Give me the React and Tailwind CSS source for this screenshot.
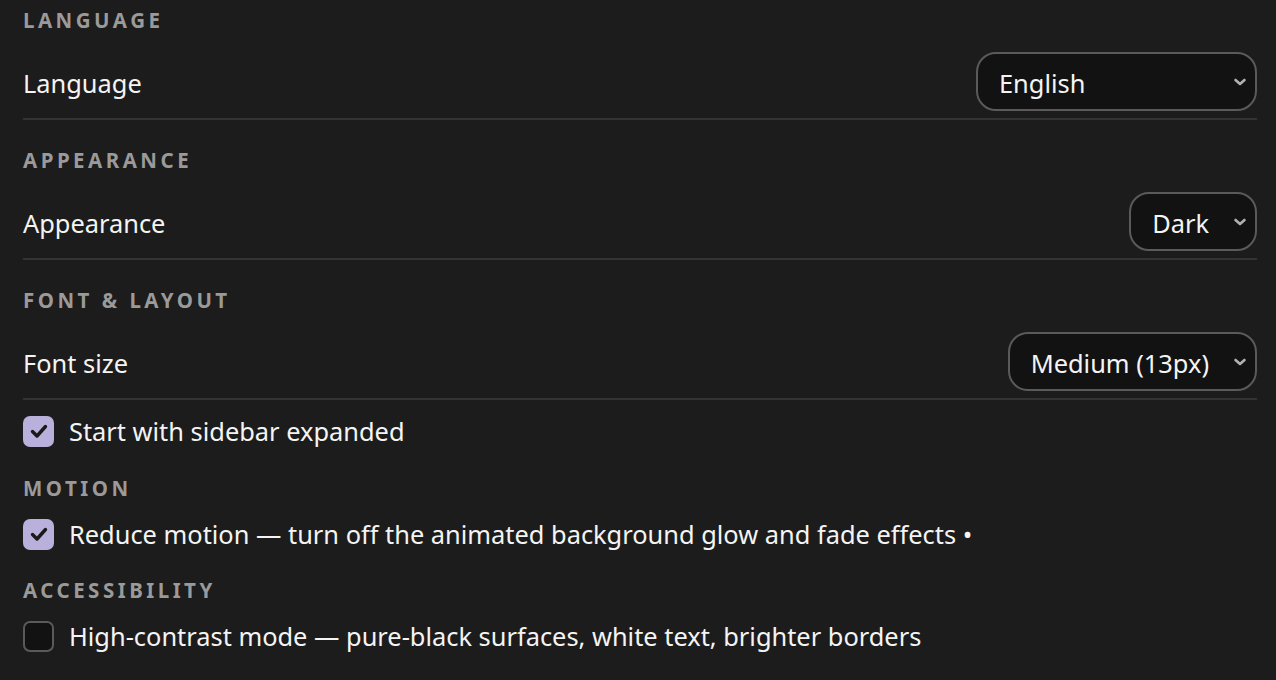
import React from "react";

function Chevron() {
  return (
    <svg width="14" height="9" viewBox="0 0 14 9" className="absolute right-[8px] top-1/2 -translate-y-1/2">
      <path d="M2.5 2.5l4.5 4 4.5-4" fill="none" stroke="#b0b0b0" strokeWidth="2.6" strokeLinecap="round" strokeLinejoin="round" />
    </svg>
  );
}

function Select({ value, className }) {
  return (
    <div
      className={`relative h-[59px] flex items-center rounded-[20px] border-2 border-[#5a5a5a] bg-[#121212] pl-[21px] pr-[46px] text-[#f4f4f4] ${className}`}
    >
      <span className="pt-[3px]">{value}</span>
      <Chevron />
    </div>
  );
}

function Heading({ children, className }) {
  return (
    <div
      className={`h-[24px] leading-[24px] text-[20.5px] font-bold tracking-[0.17em] text-[#9a9a9a] ${className}`}
    >
      {children}
    </div>
  );
}

function Row({ label, value, selectClass }) {
  return (
    <div className="mt-[20px] flex items-center justify-between pb-[7px] border-b-2 border-[#333333]">
      <span className="pt-[3px] text-[#f4f4f4]">{label}</span>
      <Select value={value} className={selectClass} />
    </div>
  );
}

function Check({ checked, label, className }) {
  return (
    <div className={`flex items-center gap-[15px] h-[30px] ${className}`}>
      {checked ? (
        <span className="w-[31px] h-[31px] shrink-0 rounded-[7px] bg-[#b9b1dc] flex items-center justify-center">
          <svg width="22" height="18" viewBox="0 0 22 18">
            <path d="M4.5 9.5l4.5 4.5 8.5-9.5" fill="none" stroke="#1a1a1a" strokeWidth="3.4" strokeLinecap="round" strokeLinejoin="round" />
          </svg>
        </span>
      ) : (
        <span className="w-[31px] h-[31px] shrink-0 rounded-[7px] border-2 border-[#5a5a5a] bg-[#121212]" />
      )}
      <span className="text-[#f4f4f4]">{label}</span>
    </div>
  );
}

export default function App() {
  return (
    <div
      className="min-h-screen flex flex-col bg-[#1c1c1c] pl-[23px] pr-[19px] text-[25.4px]"
      style={{ fontFamily: '"Noto Sans", sans-serif' }}
    >
      <Heading className="mt-[8px]">LANGUAGE</Heading>
      <Row label="Language" value="English" selectClass="w-[281px]" />

      <Heading className="mt-[28px]">APPEARANCE</Heading>
      <Row label="Appearance" value="Dark" />

      <Heading className="mt-[28px]">FONT &amp; LAYOUT</Heading>
      <Row label="Font size" value="Medium (13px)" />

      <Check checked label="Start with sidebar expanded" className="mt-[16px]" />

      <Heading className="mt-[30px]">MOTION</Heading>
      <Check
        checked
        label="Reduce motion — turn off the animated background glow and fade effects •"
        className="mt-[19px]"
      />

      <Heading className="mt-[29px]">ACCESSIBILITY</Heading>
      <Check label="High-contrast mode — pure-black surfaces, white text, brighter borders" className="mt-[19px]" />
    </div>
  );
}
